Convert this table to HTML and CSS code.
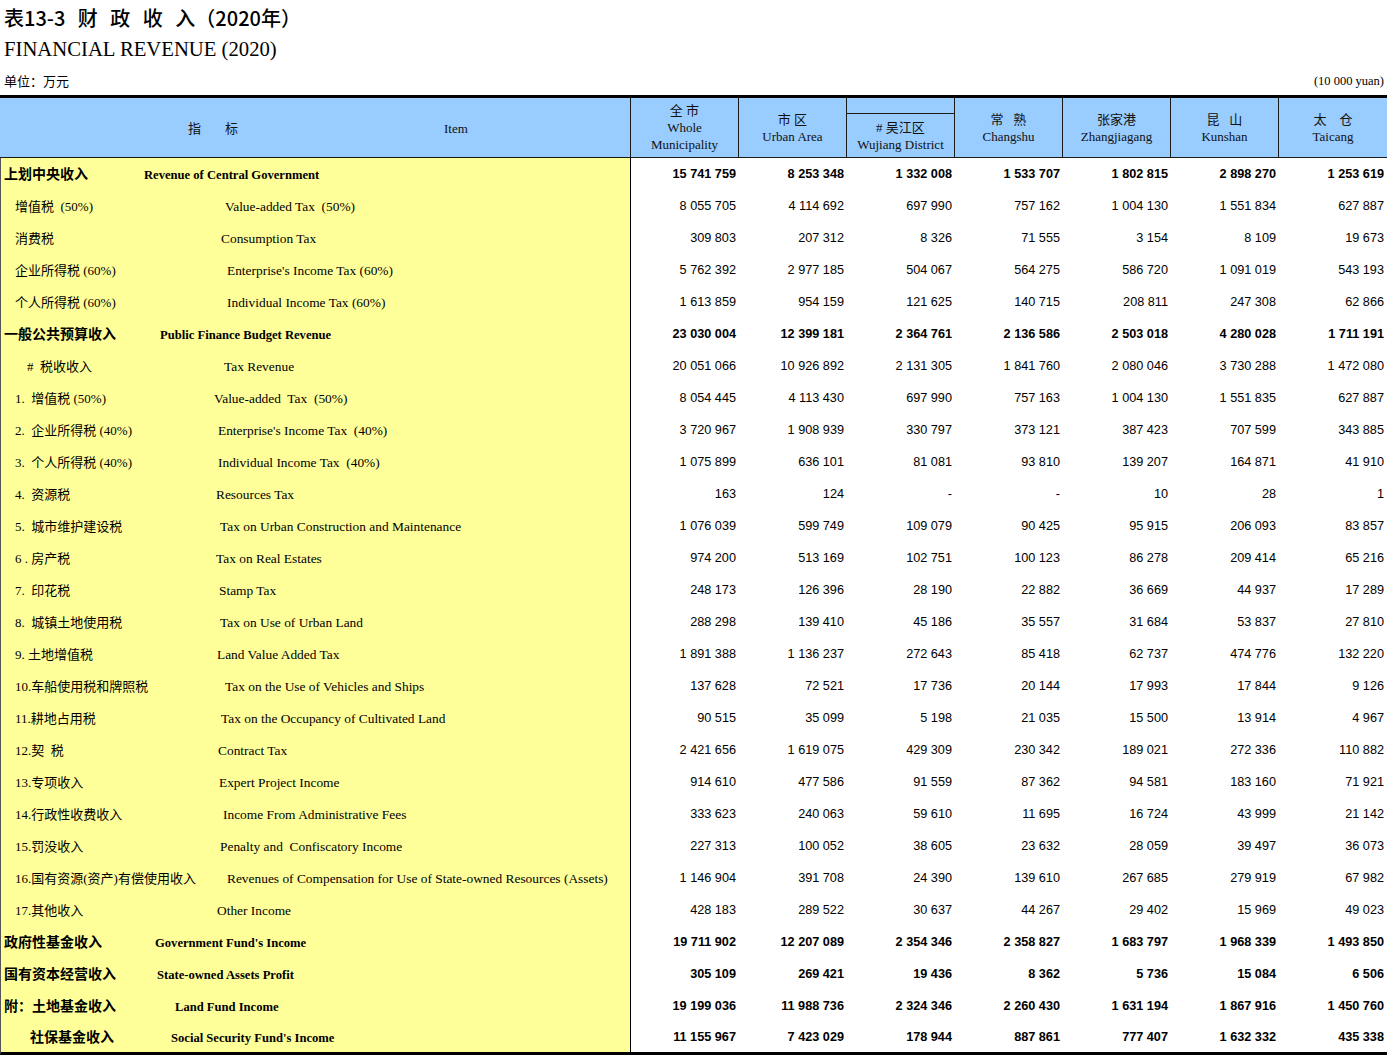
FILE: index.html
```html
<!DOCTYPE html>
<html lang="zh-CN">
<head>
<meta charset="utf-8">
<title>财政收入 (2020年)</title>
<link rel="stylesheet" href="styles.css">
</head>
<body>
<header class="head">
  <h1 class="title">表13-3 财 政 收 入（2020年）</h1>
  <h2 class="entitle">FINANCIAL REVENUE (2020)</h2>
  <div class="unitrow"><span class="unit-zh">单位：万元</span><span class="unit-en">(10 000 yuan)</span></div>
</header>
<table class="fin">
  <colgroup><col class="c-item"><col class="c-num" span="7"></colgroup>
  <thead>
    <tr class="h1">
      <th rowspan="2" class="hitem"><span class="hz">指</span><span class="hz hz2">标</span><span class="hen">Item</span></th>
      <th rowspan="2"><div class="hzh">全 市</div><div>Whole</div><div>Municipality</div></th>
      <th rowspan="2"><div class="hzh">市 区</div><div>Urban Area</div></th>
      <th class="wtop"></th>
      <th rowspan="2"><div class="hzh">常   熟</div><div>Changshu</div></th>
      <th rowspan="2"><div class="hzh">张家港</div><div>Zhangjiagang</div></th>
      <th rowspan="2"><div class="hzh">昆   山</div><div>Kunshan</div></th>
      <th rowspan="2" class="last"><div class="hzh">太    仓</div><div>Taicang</div></th>
    </tr>
    <tr class="h2">
      <th><div class="hzh"># 吴江区</div><div>Wujiang District</div></th>
    </tr>
  </thead>
  <tbody>
    <tr class="b"><td class="item i0" style="--x:144px"><span class="zh">上划中央收入</span><span class="en">Revenue of Central Government</span></td><td class="n">15 741 759</td><td class="n">8 253 348</td><td class="n">1 332 008</td><td class="n">1 533 707</td><td class="n">1 802 815</td><td class="n">2 898 270</td><td class="n">1 253 619</td></tr>
    <tr><td class="item i1" style="--x:225px"><span class="zh">增值税  (50%)</span><span class="en">Value-added Tax  (50%)</span></td><td class="n">8 055 705</td><td class="n">4 114 692</td><td class="n">697 990</td><td class="n">757 162</td><td class="n">1 004 130</td><td class="n">1 551 834</td><td class="n">627 887</td></tr>
    <tr><td class="item i1" style="--x:221px"><span class="zh">消费税</span><span class="en">Consumption Tax</span></td><td class="n">309 803</td><td class="n">207 312</td><td class="n">8 326</td><td class="n">71 555</td><td class="n">3 154</td><td class="n">8 109</td><td class="n">19 673</td></tr>
    <tr><td class="item i1" style="--x:227px"><span class="zh">企业所得税 (60%)</span><span class="en">Enterprise's Income Tax (60%)</span></td><td class="n">5 762 392</td><td class="n">2 977 185</td><td class="n">504 067</td><td class="n">564 275</td><td class="n">586 720</td><td class="n">1 091 019</td><td class="n">543 193</td></tr>
    <tr><td class="item i1" style="--x:227px"><span class="zh">个人所得税 (60%)</span><span class="en">Individual Income Tax (60%)</span></td><td class="n">1 613 859</td><td class="n">954 159</td><td class="n">121 625</td><td class="n">140 715</td><td class="n">208 811</td><td class="n">247 308</td><td class="n">62 866</td></tr>
    <tr class="b"><td class="item i0" style="--x:160px"><span class="zh">一般公共预算收入</span><span class="en">Public Finance Budget Revenue</span></td><td class="n">23 030 004</td><td class="n">12 399 181</td><td class="n">2 364 761</td><td class="n">2 136 586</td><td class="n">2 503 018</td><td class="n">4 280 028</td><td class="n">1 711 191</td></tr>
    <tr><td class="item i2" style="--x:224px"><span class="zh">#  税收收入</span><span class="en">Tax Revenue</span></td><td class="n">20 051 066</td><td class="n">10 926 892</td><td class="n">2 131 305</td><td class="n">1 841 760</td><td class="n">2 080 046</td><td class="n">3 730 288</td><td class="n">1 472 080</td></tr>
    <tr><td class="item i1" style="--x:214px"><span class="zh">1.  增值税 (50%)</span><span class="en">Value-added  Tax  (50%)</span></td><td class="n">8 054 445</td><td class="n">4 113 430</td><td class="n">697 990</td><td class="n">757 163</td><td class="n">1 004 130</td><td class="n">1 551 835</td><td class="n">627 887</td></tr>
    <tr><td class="item i1" style="--x:218px"><span class="zh">2.  企业所得税 (40%)</span><span class="en">Enterprise's Income Tax  (40%)</span></td><td class="n">3 720 967</td><td class="n">1 908 939</td><td class="n">330 797</td><td class="n">373 121</td><td class="n">387 423</td><td class="n">707 599</td><td class="n">343 885</td></tr>
    <tr><td class="item i1" style="--x:218px"><span class="zh">3.  个人所得税 (40%)</span><span class="en">Individual Income Tax  (40%)</span></td><td class="n">1 075 899</td><td class="n">636 101</td><td class="n">81 081</td><td class="n">93 810</td><td class="n">139 207</td><td class="n">164 871</td><td class="n">41 910</td></tr>
    <tr><td class="item i1" style="--x:216px"><span class="zh">4.  资源税</span><span class="en">Resources Tax</span></td><td class="n">163</td><td class="n">124</td><td class="n">-</td><td class="n">-</td><td class="n">10</td><td class="n">28</td><td class="n">1</td></tr>
    <tr><td class="item i1" style="--x:220px"><span class="zh">5.  城市维护建设税</span><span class="en">Tax on Urban Construction and Maintenance</span></td><td class="n">1 076 039</td><td class="n">599 749</td><td class="n">109 079</td><td class="n">90 425</td><td class="n">95 915</td><td class="n">206 093</td><td class="n">83 857</td></tr>
    <tr><td class="item i1" style="--x:216px"><span class="zh">6 . 房产税</span><span class="en">Tax on Real Estates</span></td><td class="n">974 200</td><td class="n">513 169</td><td class="n">102 751</td><td class="n">100 123</td><td class="n">86 278</td><td class="n">209 414</td><td class="n">65 216</td></tr>
    <tr><td class="item i1" style="--x:219px"><span class="zh">7.  印花税</span><span class="en">Stamp Tax</span></td><td class="n">248 173</td><td class="n">126 396</td><td class="n">28 190</td><td class="n">22 882</td><td class="n">36 669</td><td class="n">44 937</td><td class="n">17 289</td></tr>
    <tr><td class="item i1" style="--x:220px"><span class="zh">8.  城镇土地使用税</span><span class="en">Tax on Use of Urban Land</span></td><td class="n">288 298</td><td class="n">139 410</td><td class="n">45 186</td><td class="n">35 557</td><td class="n">31 684</td><td class="n">53 837</td><td class="n">27 810</td></tr>
    <tr><td class="item i1" style="--x:217px"><span class="zh">9. 土地增值税</span><span class="en">Land Value Added Tax</span></td><td class="n">1 891 388</td><td class="n">1 136 237</td><td class="n">272 643</td><td class="n">85 418</td><td class="n">62 737</td><td class="n">474 776</td><td class="n">132 220</td></tr>
    <tr><td class="item i1" style="--x:225px"><span class="zh">10.车船使用税和牌照税</span><span class="en">Tax on the Use of Vehicles and Ships</span></td><td class="n">137 628</td><td class="n">72 521</td><td class="n">17 736</td><td class="n">20 144</td><td class="n">17 993</td><td class="n">17 844</td><td class="n">9 126</td></tr>
    <tr><td class="item i1" style="--x:221px"><span class="zh">11.耕地占用税</span><span class="en">Tax on the Occupancy of Cultivated Land</span></td><td class="n">90 515</td><td class="n">35 099</td><td class="n">5 198</td><td class="n">21 035</td><td class="n">15 500</td><td class="n">13 914</td><td class="n">4 967</td></tr>
    <tr><td class="item i1" style="--x:218px"><span class="zh">12.契  税</span><span class="en">Contract Tax</span></td><td class="n">2 421 656</td><td class="n">1 619 075</td><td class="n">429 309</td><td class="n">230 342</td><td class="n">189 021</td><td class="n">272 336</td><td class="n">110 882</td></tr>
    <tr><td class="item i1" style="--x:219px"><span class="zh">13.专项收入</span><span class="en">Expert Project Income</span></td><td class="n">914 610</td><td class="n">477 586</td><td class="n">91 559</td><td class="n">87 362</td><td class="n">94 581</td><td class="n">183 160</td><td class="n">71 921</td></tr>
    <tr><td class="item i1" style="--x:223px"><span class="zh">14.行政性收费收入</span><span class="en">Income From Administrative Fees</span></td><td class="n">333 623</td><td class="n">240 063</td><td class="n">59 610</td><td class="n">11 695</td><td class="n">16 724</td><td class="n">43 999</td><td class="n">21 142</td></tr>
    <tr><td class="item i1" style="--x:220px"><span class="zh">15.罚没收入</span><span class="en">Penalty and  Confiscatory Income</span></td><td class="n">227 313</td><td class="n">100 052</td><td class="n">38 605</td><td class="n">23 632</td><td class="n">28 059</td><td class="n">39 497</td><td class="n">36 073</td></tr>
    <tr><td class="item i1" style="--x:227px"><span class="zh">16.国有资源(资产)有偿使用收入</span><span class="en">Revenues of Compensation for Use of State-owned Resources (Assets)</span></td><td class="n">1 146 904</td><td class="n">391 708</td><td class="n">24 390</td><td class="n">139 610</td><td class="n">267 685</td><td class="n">279 919</td><td class="n">67 982</td></tr>
    <tr><td class="item i1" style="--x:217px"><span class="zh">17.其他收入</span><span class="en">Other Income</span></td><td class="n">428 183</td><td class="n">289 522</td><td class="n">30 637</td><td class="n">44 267</td><td class="n">29 402</td><td class="n">15 969</td><td class="n">49 023</td></tr>
    <tr class="b"><td class="item i0" style="--x:155px"><span class="zh">政府性基金收入</span><span class="en">Government Fund's Income</span></td><td class="n">19 711 902</td><td class="n">12 207 089</td><td class="n">2 354 346</td><td class="n">2 358 827</td><td class="n">1 683 797</td><td class="n">1 968 339</td><td class="n">1 493 850</td></tr>
    <tr class="b"><td class="item i0" style="--x:157px"><span class="zh">国有资本经营收入</span><span class="en">State-owned Assets Profit</span></td><td class="n">305 109</td><td class="n">269 421</td><td class="n">19 436</td><td class="n">8 362</td><td class="n">5 736</td><td class="n">15 084</td><td class="n">6 506</td></tr>
    <tr class="b"><td class="item i0" style="--x:175px"><span class="zh">附：土地基金收入</span><span class="en">Land Fund Income</span></td><td class="n">19 199 036</td><td class="n">11 988 736</td><td class="n">2 324 346</td><td class="n">2 260 430</td><td class="n">1 631 194</td><td class="n">1 867 916</td><td class="n">1 450 760</td></tr>
    <tr class="b end"><td class="item i3" style="--x:171px"><span class="zh">社保基金收入</span><span class="en">Social Security Fund's Income</span></td><td class="n">11 155 967</td><td class="n">7 423 029</td><td class="n">178 944</td><td class="n">887 861</td><td class="n">777 407</td><td class="n">1 632 332</td><td class="n">435 338</td></tr>
  </tbody>
</table>
</body>
</html>
```

FILE: styles.css
```css
html, body {
  margin: 0;
  padding: 0;
  background: #fff;
  overflow: hidden;
}
body {
  width: 1387px;
  color: #000;
  font-family: "Liberation Serif", "Noto Sans CJK SC", serif;
}

/* ---- page heading ---- */
.head {
  display: flex;
  flex-direction: column;
}
.title {
  margin: 0;
  height: 36px;
  padding-left: 4px;
  font: 500 20px/36px "Noto Sans CJK SC", sans-serif;
  word-spacing: 8px;
  white-space: pre;
}
.entitle {
  margin: 0;
  height: 26px;
  padding-left: 4px;
  font: normal 20.7px/26px "Liberation Serif", serif;
}
.unitrow {
  height: 33px;
  box-sizing: border-box;
  padding: 6px 3px 0 4px;
  display: flex;
  justify-content: space-between;
  align-items: flex-start;
}
.unit-zh {
  font: 13px/26px "Noto Sans CJK SC", sans-serif;
}
.unit-en {
  font: 12.5px/26px "Liberation Serif", serif;
}

/* ---- table ---- */
table.fin {
  border-collapse: separate;
  border-spacing: 0;
  table-layout: fixed;
  width: 1387px;
  border-top: 3px solid #000;
}
.c-item { width: 631px; }
.c-num { width: 108px; }

thead th {
  background: #99ccff;
  border-right: 1px solid #1a1a1a;
  border-bottom: 1px solid #1a1a1a;
  padding: 0;
  box-sizing: border-box;
  text-align: center;
  vertical-align: middle;
  font: normal 13px/17px "Liberation Serif", "Noto Sans CJK SC", serif;
  color: #111;
  white-space: nowrap;
}
thead th.last { border-right: none; }
tr.h1 { height: 16px; }
tr.h2 { height: 44px; }
.hzh {
  white-space: pre;
}
.hitem {
  text-align: left;
  padding-left: 188px;
}
.hz, .hen {
  display: inline-block;
  vertical-align: middle;
}
.hz2 { margin-left: 24px; }
.hen { margin-left: 206px; }

tbody tr { height: 32px; }
tbody td {
  padding: 0;
  box-sizing: border-box;
  vertical-align: middle;
  white-space: nowrap;
}
td.item {
  background: #ffff99;
  border-right: 1px solid #000;
  border-left: 1px solid #555;
  padding-left: calc(var(--p) - 1px);
}
.i0 { --p: 4px; }
.i1 { --p: 15px; }
.i2 { --p: 27px; }
.i3 { --p: 30px; }

.zh {
  display: inline-block;
  width: calc(var(--x) - var(--p));
  white-space: pre;
  font: 13px/16px "Liberation Serif", "Noto Sans CJK SC", serif;
  vertical-align: middle;
}
.en {
  display: inline-block;
  white-space: pre;
  font: 13.4px/16px "Liberation Serif", serif;
  vertical-align: middle;
}
tr.b .zh {
  font-size: 14px;
  font-weight: bold;
}
tr.b .en {
  font-size: 12.6px;
  font-weight: bold;
}

td.n {
  text-align: right;
  padding-right: 3px;
  font: 12.7px "Liberation Sans", Arial, sans-serif;
}
tr.b td.n { font-weight: bold; }

tr.end { height: 33px; }
tr.end td { border-bottom: 3px solid #000; }
```
